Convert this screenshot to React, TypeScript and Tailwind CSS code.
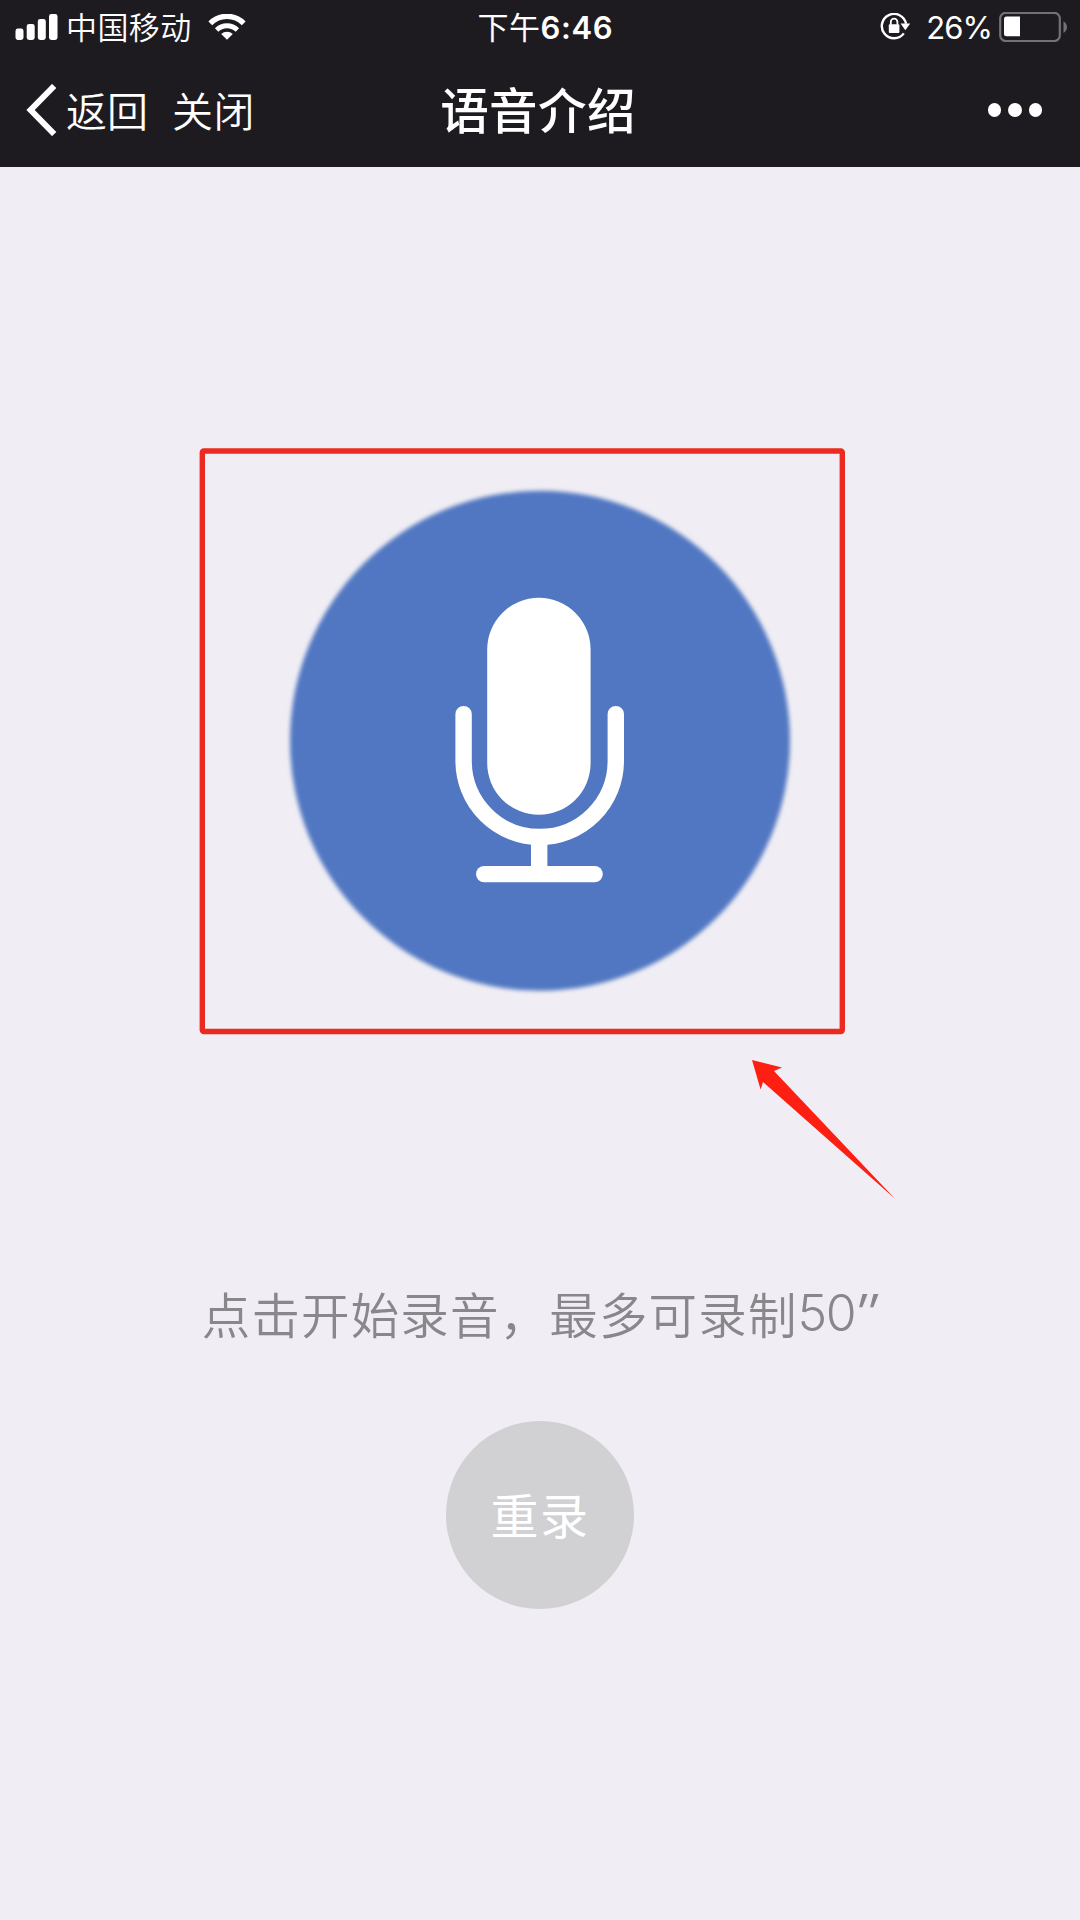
function SignalIcon() {
  return (
    <svg className="h-[27px] w-[43px] shrink-0" viewBox="0 0 43 27" fill="#fff">
      <rect x="0.5" y="14.5" width="8" height="11.5" rx="2.4" />
      <rect x="11.7" y="10" width="8" height="16" rx="2.4" />
      <rect x="22.8" y="5" width="8" height="21" rx="2.4" />
      <rect x="34" y="0" width="8.5" height="26" rx="2.4" />
    </svg>
  );
}

function WifiIcon() {
  return (
    <svg className="h-[27px] w-[38px] shrink-0" viewBox="0 0 38 27" fill="none" stroke="#fff">
      <path d="M2.3 9.3A23.6 23.6 0 0 1 35.7 9.3" strokeWidth="5.4" />
      <path d="M8.6 16A14.8 14.8 0 0 1 29.4 16" strokeWidth="4.8" />
      <path d="M19 25.8L13.2 20.1A8.4 8.4 0 0 1 24.8 20.1Z" fill="#fff" stroke="none" />
    </svg>
  );
}

function RotationLockIcon() {
  return (
    <svg className="h-[28px] w-[31px] shrink-0" viewBox="0 0 31 28" fill="none" stroke="#fff">
      <path d="M26 10.8A12.2 12.2 0 1 0 23.8 20.4" strokeWidth="2.4" />
      <path d="M20.6 10.6H30.2L25.3 17.2Z" fill="#fff" stroke="none" />
      <rect x="8.8" y="11.3" width="10.6" height="8.6" rx="1" fill="#fff" stroke="none" />
      <path d="M10.8 11.8V8.9a3.3 3.3 0 0 1 6.6 0v2.9" strokeWidth="1.8" />
    </svg>
  );
}

function BatteryIcon() {
  return (
    <svg className="h-[31px] w-[69px] shrink-0" viewBox="0 0 69 31" fill="none">
      <rect x="1.2" y="0.8" width="59.6" height="28.2" rx="5.5" stroke="#737176" strokeWidth="2.2" />
      <path d="M7.5 4.6H21V24.2H7.5A2.5 2.5 0 0 1 5 21.7V7.1A2.5 2.5 0 0 1 7.5 4.6Z" fill="#fff" />
      <path d="M64.5 9.2Q68 11.6 68 15.1T64.5 21Z" fill="#737176" />
    </svg>
  );
}

function StatusBar() {
  return (
    <div className="grid h-[54px] grid-cols-[1fr_auto_1fr] items-center pr-[12px] pl-[15px]">
      <div className="flex items-center">
        <SignalIcon />
        <span className="ml-[8px] pb-[3px] text-[31px] leading-none font-[350] tracking-[0.4px]">中国移动</span>
        <span className="ml-[16px] flex"><WifiIcon /></span>
      </div>
      <div className="flex items-center pl-[8px] text-[31px] leading-none">
        <span className="pb-[3px] tracking-[0.4px]">下午</span>
        <span className="font-['Inter'] text-[31px] font-semibold tracking-[0.7px]">6:46</span>
      </div>
      <div className="flex items-center justify-end">
        <RotationLockIcon />
        <span className="ml-[15px] font-['Inter'] text-[31px] leading-none tracking-[-0.9px]">26%</span>
        <span className="ml-[7px] flex"><BatteryIcon /></span>
      </div>
    </div>
  );
}

function NavBar() {
  return (
    <div className="grid h-[113px] grid-cols-[1fr_auto_1fr] items-center pr-[38px] pb-[1px] pl-[26px]">
      <div className="flex items-center pb-[1px] leading-none font-[350]">
        <svg className="h-[52px] w-[31px]" viewBox="0 0 31 52" fill="none" stroke="#fff" strokeWidth="6">
          <path d="M28.2 2L4.6 26L28.2 50" />
        </svg>
        <span className="ml-[9px] text-[41px]">返回</span>
        <span className="ml-[24px] text-[41px] tracking-[0.5px]">关闭</span>
      </div>
      <h1 className="pb-[3px] pl-[8px] text-[48.5px] leading-none font-medium tracking-[0.4px]">语音介绍</h1>
      <div className="flex items-center justify-end gap-[7px]">
        <i className="size-[13.5px] rounded-full bg-white" />
        <i className="size-[13.5px] rounded-full bg-white" />
        <i className="size-[13.5px] rounded-full bg-white" />
      </div>
    </div>
  );
}

function MicButton() {
  return (
    <button className="relative mt-[323px] block size-[502px] shrink-0">
      <svg className="size-full overflow-visible" viewBox="289 489.5 502 502">
        <defs>
          <filter id="edge" x="-5%" y="-5%" width="110%" height="110%">
            <feGaussianBlur stdDeviation="2" />
          </filter>
        </defs>
        <circle cx="540" cy="740.3" r="250" fill="#5177c2" filter="url(#edge)" />
        <rect x="487.2" y="597.3" width="103.4" height="217" rx="51.7" fill="#fff" />
        <g fill="none" stroke="#fff" strokeWidth="16.4" strokeLinecap="round">
          <path d="M463.6 713.6V760.4A76 76 0 0 0 615.8 760.4V713.6" />
          <path d="M539.2 840V870" strokeLinecap="butt" />
          <path d="M484.2 873.6H594.6" />
        </g>
      </svg>
      <svg className="pointer-events-none absolute top-[-42px] left-[-90px] h-[588px] w-[648px]" viewBox="199 448 648 588" fill="none">
        <rect x="202.3" y="451" width="640" height="580.5" rx="1.5" stroke="#ec2a1f" strokeWidth="5.4" strokeLinejoin="round" />
      </svg>
      <svg className="pointer-events-none absolute top-[569px] left-[462px] h-[140px] w-[146px]" viewBox="751 1059 146 140">
        <path d="M752 1060L782 1067.5L774 1071L895 1198.8L763 1082L760.6 1089.5Z" fill="#fc1f12" />
      </svg>
    </button>
  );
}

export default function App() {
  return (
    <div className="flex h-[1920px] w-[1080px] flex-col overflow-hidden bg-[#f0eef4] font-['Noto_Sans_CJK_SC',sans-serif]">
      <header className="h-[167px] shrink-0 bg-[#1e1b20] text-white">
        <StatusBar />
        <NavBar />
      </header>
      <main className="flex flex-1 flex-col items-center">
        <MicButton />
        <p className="mt-[289px] flex h-[64px] items-center pr-[2px] text-[48.5px] leading-none font-[350] tracking-[1.15px] whitespace-nowrap text-[#89878c]">
          点击开始录音，最多可录制
          <span className="font-['Inter'] text-[50px] font-[350] tracking-[-1.5px]">50</span>
          <span className="font-['Inter'] text-[50px] font-normal tracking-[-1px] italic">″</span>
        </p>
        <button className="mt-[76px] flex size-[188px] shrink-0 items-center justify-center rounded-full bg-[#d1d0d2] pb-[5px] text-[48px] leading-none tracking-[1.5px] text-white">
          重录
        </button>
      </main>
    </div>
  );
}
